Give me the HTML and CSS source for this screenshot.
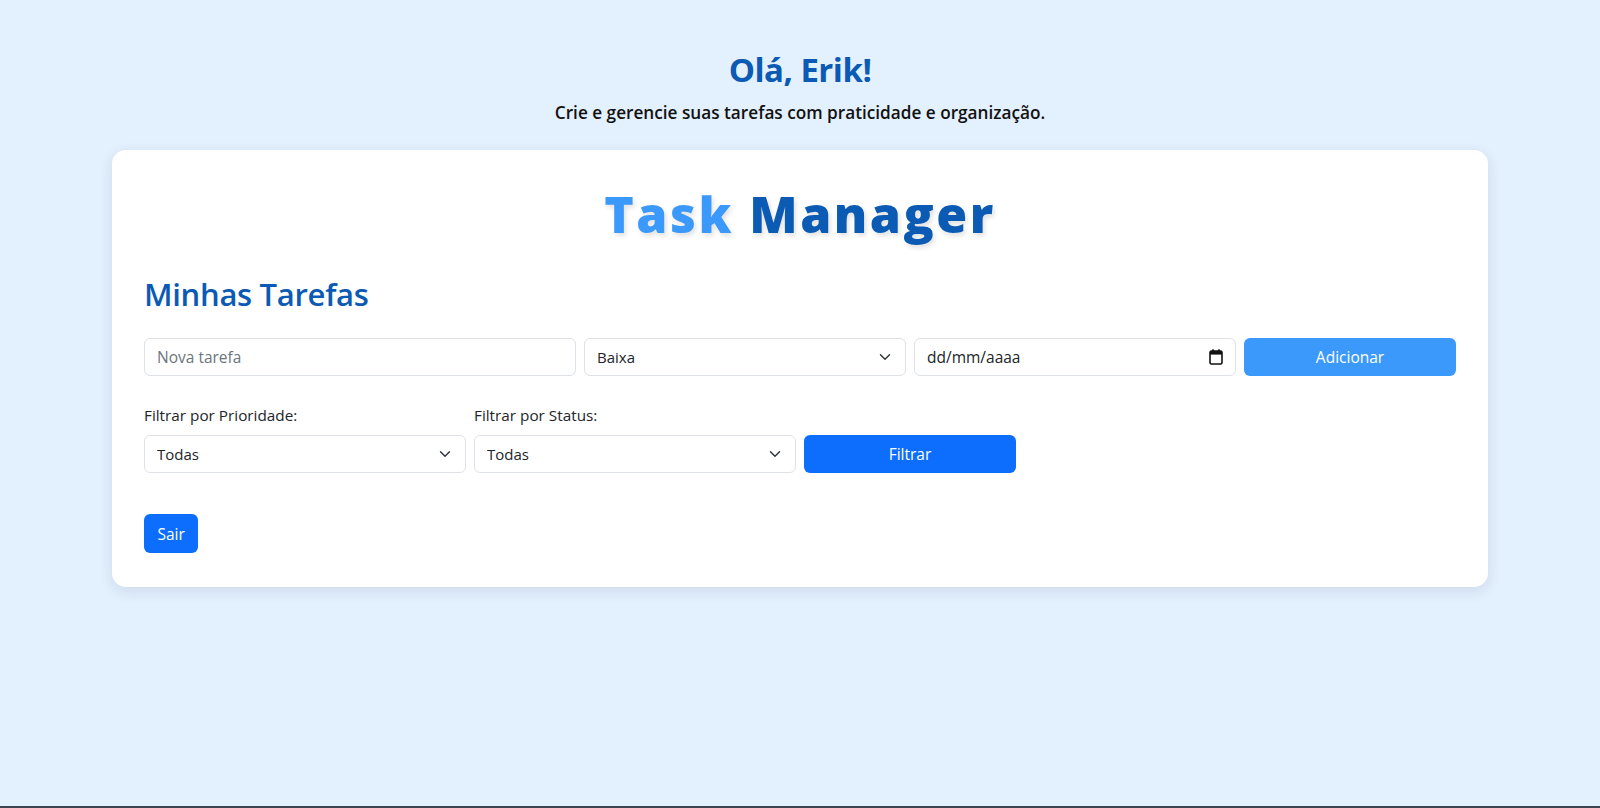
FILE: index.html
```html
<!DOCTYPE html>
<html lang="pt-BR">
<head>
<meta charset="utf-8">
<title>Task Manager</title>
<link rel="stylesheet" href="styles.css">
</head>
<body>
  <header class="greeting">
    <h1 class="greeting-title">Olá, Erik!</h1>
    <p class="greeting-sub">Crie e gerencie suas tarefas com praticidade e organização.</p>
  </header>

  <main class="card">
    <h2 class="brand"><span class="brand-light">Task</span> <span class="brand-dark">Manager</span></h2>
    <h3 class="section-title">Minhas Tarefas</h3>

    <form class="grid add-row">
      <div class="col-4"><input class="field" type="text" placeholder="Nova tarefa"></div>
      <div class="col-3">
        <select class="field select">
          <option>Baixa</option>
          <option>Média</option>
          <option>Alta</option>
        </select>
      </div>
      <div class="col-3"><input class="field date" type="text" placeholder="dd/mm/aaaa"></div>
      <div class="col-2"><button type="button" class="btn btn-light">Adicionar</button></div>
    </form>

    <div class="grid filter-row">
      <div class="col-3">
        <label class="label">Filtrar por Prioridade:</label>
        <select class="field select"><option>Todas</option></select>
      </div>
      <div class="col-3">
        <label class="label">Filtrar por Status:</label>
        <select class="field select"><option>Todas</option></select>
      </div>
      <div class="col-2"><button type="button" class="btn btn-primary">Filtrar</button></div>
    </div>

    <div class="logout">
      <button type="button" class="btn btn-primary btn-auto">Sair</button>
    </div>
  </main>
  <div class="taskbar"></div>
</body>
</html>
```

FILE: styles.css
```css
* { box-sizing: border-box; }

html, body {
  margin: 0;
  height: 100%;
}

body {
  background: #e3f0fd;
  font-family: "Open Sans", "Noto Sans", "Liberation Sans", sans-serif;
  color: #212529;
  display: flex;
  flex-direction: column;
  padding-top: 48px;
}

.greeting {
  text-align: center;
}

.greeting-title {
  margin: 0;
  font-size: 33px;
  line-height: 44px;
  font-weight: 700;
  color: #0b5ab3;
  letter-spacing: -0.5px;
}

.greeting-sub {
  margin: 9px 0 0;
  font-size: 17.2px;
  line-height: 24px;
  font-weight: 600;
  color: #111;
}

.card {
  margin: 25px 112px 0;
  background: #fff;
  border-radius: 14px;
  box-shadow: 0 4px 14px rgba(30, 60, 110, 0.12);
  padding: 31px 32px 34px;
}

.brand {
  margin: 0;
  text-align: center;
  font-size: 50px;
  line-height: 66px;
  font-weight: 800;
  letter-spacing: 2.5px;
  text-shadow: 2px 3px 5px rgba(0, 0, 0, 0.12);
}

.brand-light { color: #3a99fb; }
.brand-dark { color: #0b5ab3; }

.section-title {
  margin: 27px 0 0;
  font-size: 31px;
  line-height: 40px;
  font-weight: 600;
  color: #0b5ab3;
  letter-spacing: -0.3px;
}

.grid {
  display: grid;
  grid-template-columns: repeat(12, 1fr);
  column-gap: 8px;
}

.col-2 { grid-column: span 2; }
.col-3 { grid-column: span 3; }
.col-4 { grid-column: span 4; }

.add-row {
  margin: 24px 0 0;
}

.filter-row {
  margin-top: 27px;
  align-items: end;
}

.field {
  display: block;
  width: 100%;
  height: 38px;
  padding: 6px 12px;
  font-family: inherit;
  font-size: 15.5px;
  color: #212529;
  background: #fff;
  border: 1px solid #dee2e6;
  border-radius: 6px;
  outline: none;
}

.select { font-size: 15px; }

.field::placeholder { color: #6c757d; }

.select {
  appearance: none;
  -webkit-appearance: none;
  padding-right: 36px;
  background-image: url("data:image/svg+xml,%3csvg xmlns='http://www.w3.org/2000/svg' viewBox='0 0 16 16'%3e%3cpath fill='none' stroke='%23343a40' stroke-linecap='round' stroke-linejoin='round' stroke-width='2' d='m2 5 6 6 6-6'/%3e%3c/svg%3e");
  background-repeat: no-repeat;
  background-position: right 12px center;
  background-size: 16px 12px;
}

.date {
  padding-right: 36px;
  background-image: url("data:image/svg+xml,%3csvg xmlns='http://www.w3.org/2000/svg' viewBox='0 0 14 16'%3e%3crect x='1' y='2' width='12' height='13' rx='1.5' fill='none' stroke='%23111' stroke-width='1.6'/%3e%3crect x='1' y='2' width='12' height='3.6' fill='%23111'/%3e%3crect x='3.2' y='0.3' width='1.6' height='3' fill='%23111'/%3e%3crect x='9.2' y='0.3' width='1.6' height='3' fill='%23111'/%3e%3c/svg%3e");
  background-repeat: no-repeat;
  background-position: right 12px center;
  background-size: 14px 16px;
}

.date::placeholder { color: #212529; }

.label {
  display: block;
  margin-bottom: 8px;
  font-size: 15.3px;
  line-height: 24px;
  color: #212529;
}

.btn {
  display: block;
  width: 100%;
  height: 38px;
  border: none;
  border-radius: 6px;
  font-family: inherit;
  font-size: 15.5px;
  color: #fff;
  cursor: pointer;
}

.btn-light { background: #3a99fb; }
.btn-primary { background: #0d6efd; }

.btn-auto {
  width: auto;
  padding: 0 13.5px;
  height: 39px;
}

.logout {
  margin-top: 41px;
  display: flex;
}

.taskbar {
  margin-top: auto;
  height: 2px;
  background: #3a4550;
}
```
